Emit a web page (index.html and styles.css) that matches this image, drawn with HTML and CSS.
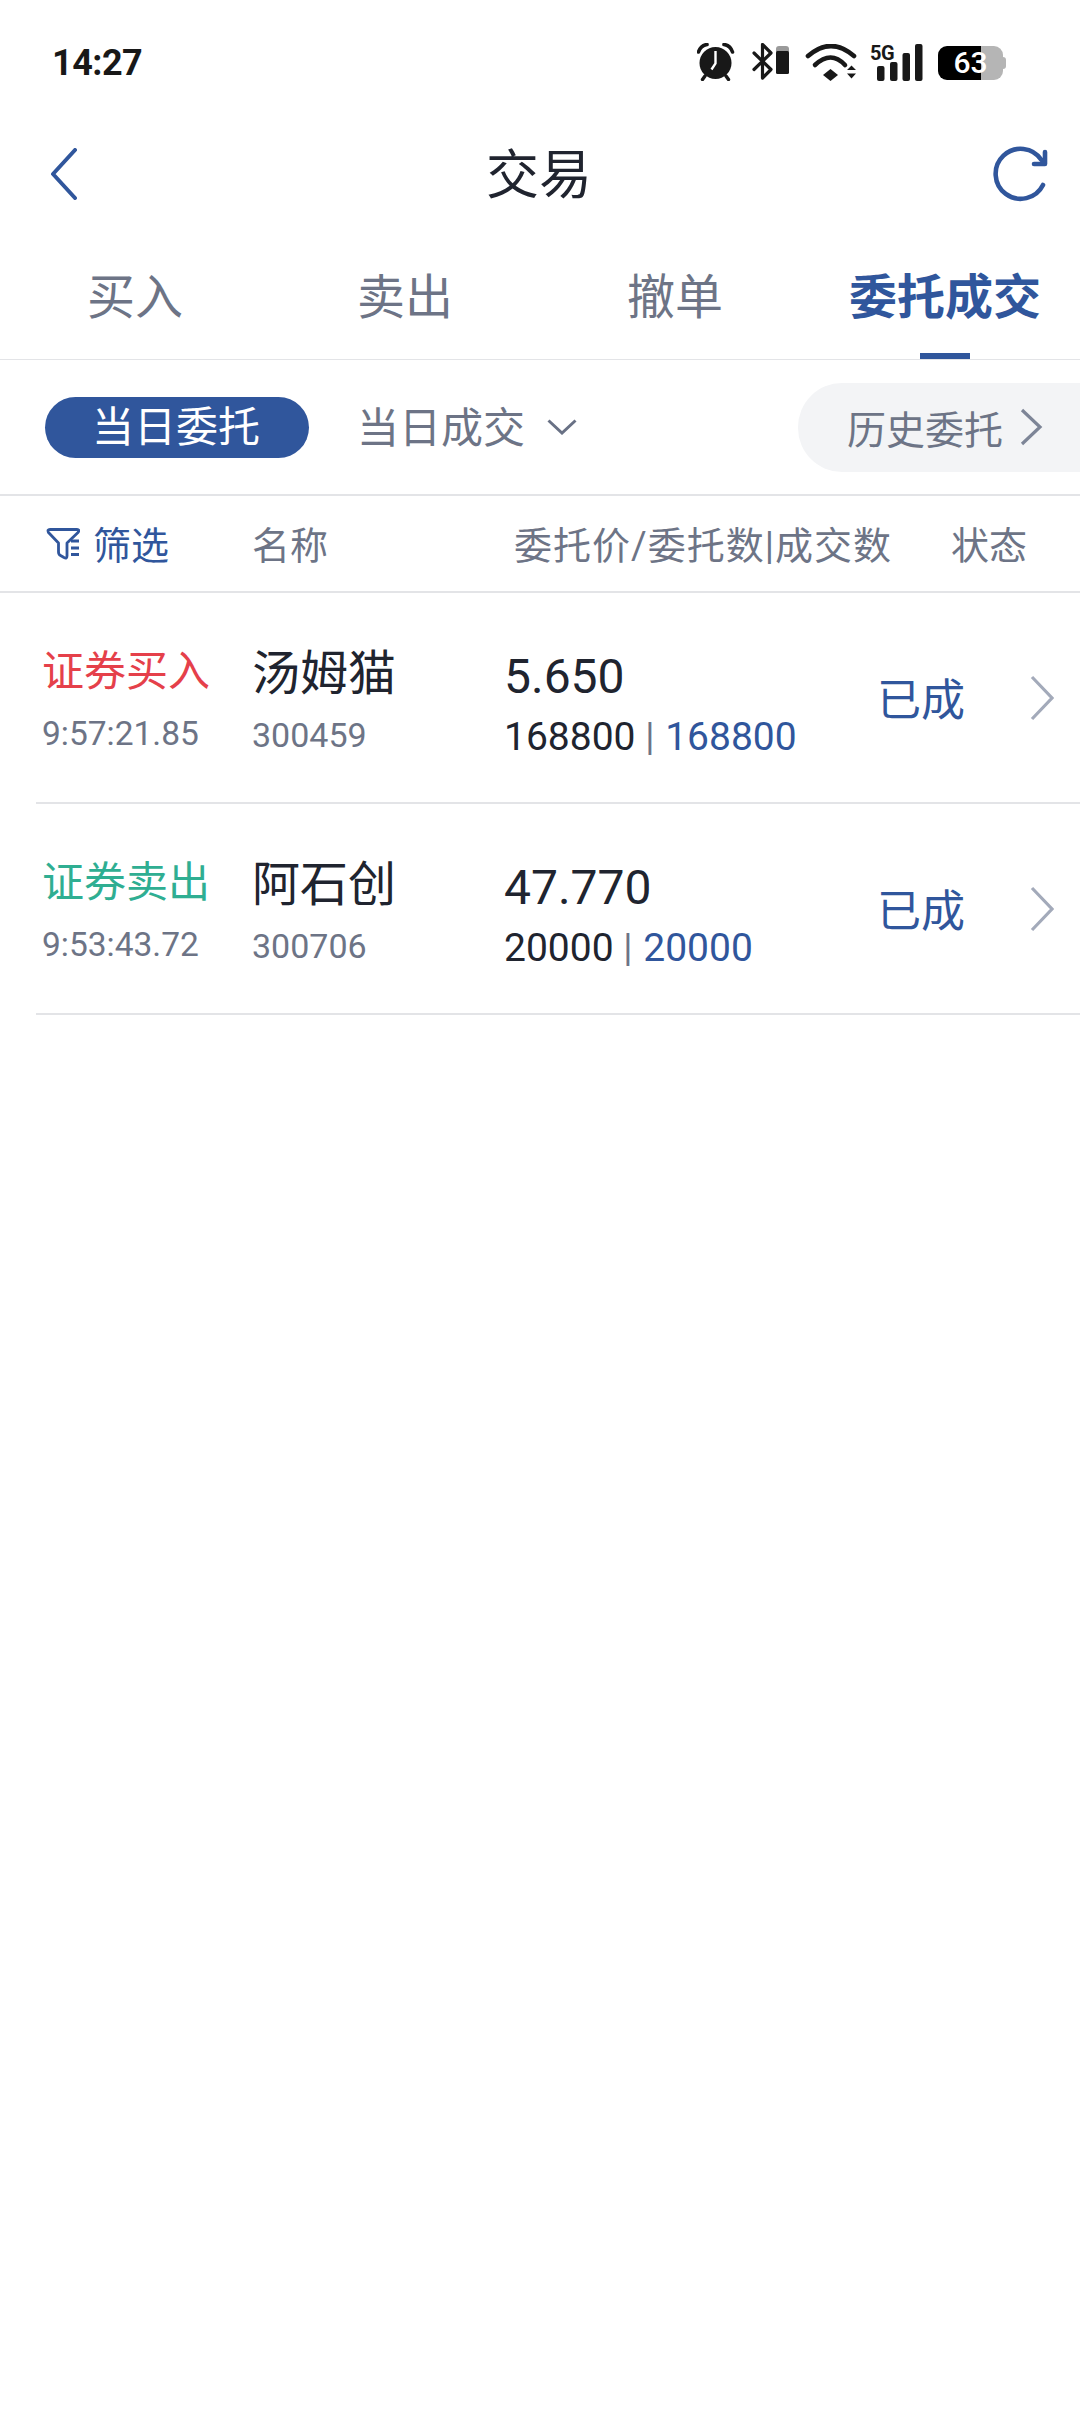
FILE: index.html
```html
<!DOCTYPE html>
<html lang="zh-CN">
<head>
<meta charset="utf-8">
<title>交易</title>
<link rel="stylesheet" href="styles.css">
</head>
<body>
<div class="app">
  <div class="statusbar">
    <span class="clock">14:27</span>
    <div class="status-icons">
      <svg class="ic-alarm" width="38" height="38" viewBox="0 0 38 38"><circle cx="18.500" cy="20" r="16" fill="#181818"/><path d="M18.500 8v12.500l-4 6" fill="none" stroke="#fff" stroke-width="2.400"/><path d="M1.500 9 C3 4.500 6 2 10 1.500 M35.500 9 C34 4.500 31 2 27 1.500" fill="none" stroke="#181818" stroke-width="3.600" stroke-linecap="round"/><path d="M8 33l-2.500 3.500M29 33l2.500 3.500" stroke="#181818" stroke-width="3.400" stroke-linecap="round"/></svg>
      <svg class="ic-bt" width="37" height="37" viewBox="0 0 37 37"><path d="M2 10 L19 26.500 L10.500 35 V1.500 L19 10 L2 26.500" fill="none" stroke="#181818" stroke-width="3.200" stroke-linejoin="round" stroke-linecap="round"/><rect x="24" y="3" width="13" height="8" rx="3" fill="#9a9a9a"/><rect x="24" y="8" width="13" height="23" rx="1.500" fill="#181818"/></svg>
      <svg class="ic-wifi" width="52" height="38" viewBox="0 0 52 38"><path d="M3 12 Q26 -8 49 12" fill="none" stroke="#181818" stroke-width="4.600" stroke-linecap="round"/><path d="M10 21 Q26 6 40 21" fill="none" stroke="#181818" stroke-width="4.600" stroke-linecap="round"/><path d="M18 31 L25.500 25 L33 31 L25.500 37 Z" fill="#181818"/><path d="M42 26 L46.500 21.500 L51 26 Z M42 29.500 L51 29.500 L46.500 34.500 Z" fill="#181818"/></svg>
      <div class="signal">
        <span class="fiveg">5G</span>
        <svg width="46" height="37" viewBox="0 0 46 37"><rect x="0" y="22" width="7.500" height="15" rx="2" fill="#181818"/><rect x="13" y="18" width="7.500" height="19" rx="2" fill="#181818"/><rect x="25.500" y="9" width="7.500" height="28" rx="2" fill="#181818"/><rect x="38" y="0" width="7.500" height="37" rx="2" fill="#181818"/></svg>
      </div>
      <div class="battery"><span>63</span></div>
    </div>
  </div>

  <header class="nav">
    <svg class="nav-back" width="28" height="52" viewBox="0 0 28 52"><path d="M25 2 L3 26 L25 50" fill="none" stroke="#30569c" stroke-width="4" stroke-linecap="round" stroke-linejoin="round"/></svg>
    <h1 class="nav-title">交易</h1>
    <svg class="nav-refresh" width="58" height="58" viewBox="0 0 58 58"><path d="M51 40 A25 25 0 1 1 49.500 15" fill="none" stroke="#30569c" stroke-width="4.600" stroke-linecap="round"/><path d="M53 7 V19 H42" fill="none" stroke="#30569c" stroke-width="4.600" stroke-linecap="round" stroke-linejoin="round"/></svg>
  </header>

  <nav class="tabs">
    <a class="tab">买入</a>
    <a class="tab">卖出</a>
    <a class="tab">撤单</a>
    <a class="tab active">委托成交</a>
  </nav>

  <div class="subtabs">
    <span class="pill">当日委托</span>
    <span class="subtab">当日成交
      <svg class="subtab-chev" width="30" height="16" viewBox="0 0 30 16"><path d="M1.500 1.500 L15 14 L28.500 1.500" fill="none" stroke="#697185" stroke-width="3"/></svg>
    </span>
    <span class="history">历史委托
      <svg width="23" height="38" viewBox="0 0 23 38"><path d="M2 2 L20 19 L2 36" fill="none" stroke="#7d8597" stroke-width="3.200"/></svg>
    </span>
  </div>

  <div class="thead">
    <span class="th-filter">
      <svg width="34" height="34" viewBox="0 0 34 34"><path d="M4 3.500 H31 Q34 3.500 32 6.500 L21 17 V30 Q21 33 18 31.500 L14.500 29.500 Q12.500 28.500 12.500 26 V17 L2.500 6.500 Q1 3.500 4 3.500 Z" fill="none" stroke="#30569c" stroke-width="2.800" stroke-linejoin="round"/><path d="M25 15 H33 M25 22 H33 M25 28.500 H33" stroke="#30569c" stroke-width="2.800"/></svg>
      筛选
    </span>
    <span class="th-name">名称</span>
    <span class="th-price">委托价/委托数|成交数</span>
    <span class="th-state">状态</span>
  </div>

  <ul class="orders">
    <li class="order">
      <div class="c-side"><span class="side buy">证券买入</span><span class="time">9:57:21.85</span></div>
      <div class="c-stock"><span class="stock">汤姆猫</span><span class="code">300459</span></div>
      <div class="c-price"><span class="price">5.650</span><span class="qty">168800 <i class="sep">|</i> <b class="filled">168800</b></span></div>
      <span class="state">已成</span>
      <svg class="chev" width="24" height="46" viewBox="0 0 24 46"><path d="M2 2 L22 23 L2 44" fill="none" stroke="#a3aaba" stroke-width="3.200"/></svg>
    </li>
    <li class="order">
      <div class="c-side"><span class="side sell">证券卖出</span><span class="time">9:53:43.72</span></div>
      <div class="c-stock"><span class="stock">阿石创</span><span class="code">300706</span></div>
      <div class="c-price"><span class="price">47.770</span><span class="qty">20000 <i class="sep">|</i> <b class="filled">20000</b></span></div>
      <span class="state">已成</span>
      <svg class="chev" width="24" height="46" viewBox="0 0 24 46"><path d="M2 2 L22 23 L2 44" fill="none" stroke="#a3aaba" stroke-width="3.200"/></svg>
    </li>
  </ul>
</div>
</body>
</html>
```

FILE: styles.css
```css
* { box-sizing: border-box; margin: 0; padding: 0; }
html, body { background: #fff; }
body { font-family: Roboto, "Noto Sans CJK SC", sans-serif; color: #20242f; }
.app { width: 1080px; height: 2412px; overflow: hidden; }

.statusbar { height: 119px; padding: 43px 77px 0 52px; display: flex; justify-content: space-between; align-items: flex-start; }
.clock { font-size: 36px; font-weight: 700; color: #181818; line-height: 36px; letter-spacing: -0.5px; margin-top: 2px; }
.status-icons { display: flex; align-items: flex-start; }
.ic-bt { margin-left: 17px; margin-top: 0; }
.ic-wifi { margin-left: 16px; margin-top: 1px; }
.signal { position: relative; margin-left: 20px; padding-top: 1px; }
.fiveg { position: absolute; left: -7px; top: 0; font-size: 20px; line-height: 20px; font-weight: 700; color: #181818; letter-spacing: -0.5px; }
.battery { position: relative; width: 65px; height: 34px; margin-left: 15px; margin-top: 3px; border-radius: 9px; background: linear-gradient(90deg, #000 0 43px, #b5b5b5 43px); color: #fff; font-size: 30px; font-weight: 500; line-height: 34px; text-align: center; }
.battery::after { content: ""; position: absolute; right: -3px; top: 11px; width: 3px; height: 12px; border-radius: 0 3px 3px 0; background: #b5b5b5; }

.nav { height: 113px; padding: 0 30px 0 50px; display: flex; align-items: center; justify-content: space-between; }
.nav-back { margin-top: -3px; }
.nav-refresh { margin-top: -3px; }
.nav-title { font-size: 53px; font-weight: 400; line-height: 60px; margin-left: 8px; }

.tabs { height: 128px; display: flex; border-bottom: 1px solid #e3e4e7; padding-top: 33px; }
.tab { width: 270px; text-align: center; font-size: 48px; line-height: 66px; height: 94px; color: #6d7486; position: relative; }
.tab.active { color: #30569c; font-weight: 700; }
.tab.active::after { content: ""; position: absolute; left: 110px; bottom: 0; width: 50px; height: 6px; background: #30569c; }

.subtabs { height: 136px; display: flex; align-items: center; border-bottom: 2px solid #e3e4e7; padding-left: 45px; position: relative; }
.pill { width: 264px; height: 61px; padding-right: 2px; border-radius: 31px; background: #30569c; color: #fff; font-size: 42px; line-height: 62px; text-align: center; }
.subtab { margin-left: 48px; padding-bottom: 6px; font-size: 42px; color: #6d7486; display: flex; align-items: center; gap: 22px; }
.subtab-chev { margin-top: 6px; }
.history { position: absolute; left: 798px; top: 23px; width: 300px; height: 89px; border-radius: 44px 0 0 44px; background: #f3f4f6; padding: 0 0 2px 49px; font-size: 39px; color: #6d7486; display: flex; align-items: center; gap: 17px; }

.thead { height: 97px; border-bottom: 2px solid #e3e4e7; display: flex; align-items: center; font-size: 38px; color: #6d7486; padding: 0 0 2px 46px; }
.th-filter { width: 206px; display: flex; align-items: center; gap: 13px; color: #30569c; }
.th-name { width: 262px; }
.th-price { width: 437px; letter-spacing: 1px; }

.orders { list-style: none; padding-left: 36px; }
.order { height: 211px; border-bottom: 2px solid #e3e4e7; display: flex; align-items: flex-start; }
.c-side { width: 216px; padding: 54px 0 0 6px; display: flex; flex-direction: column; }
.side { font-size: 42px; line-height: 50px; }
.buy { color: #e5404a; }
.sell { color: #2fae92; }
.time { font-size: 33.500px; line-height: 40px; color: #6d7486; margin-top: 17px; }
.c-stock { width: 252px; padding-top: 52px; display: flex; flex-direction: column; }
.stock { font-size: 48px; line-height: 58px; }
.code { font-size: 34px; line-height: 40px; color: #6d7486; margin-top: 12px; }
.c-price { width: 373px; padding-top: 56px; display: flex; flex-direction: column; }
.price { font-size: 48px; line-height: 56px; }
.qty { font-size: 39px; line-height: 46px; margin-top: 9px; }
.sep { font-style: normal; color: #6d7486; font-size: 38px; margin: 0 1px 0 0; }
.filled { font-weight: 400; color: #30569c; }
.state { width: 153px; align-self: center; padding-top: 6px; font-size: 44px; line-height: 56px; color: #30569c; }
.chev { flex: none; align-self: center; }
```
